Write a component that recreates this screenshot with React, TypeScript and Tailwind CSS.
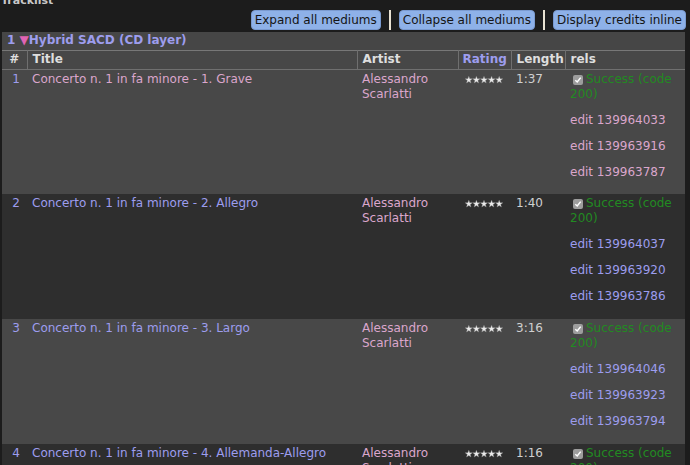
import React from 'react';

interface Track {
  no: number;
  title: string;
  artist: string;
  length: string;
  edits: string[];
  titleVisited?: boolean;
  editsVisited?: boolean;
}

const tracks: Track[] = [
  {
    no: 1,
    title: 'Concerto n. 1 in fa minore - 1. Grave',
    artist: 'Alessandro Scarlatti',
    length: '1:37',
    edits: ['139964033', '139963916', '139963787'],
    titleVisited: true,
    editsVisited: true,
  },
  {
    no: 2,
    title: 'Concerto n. 1 in fa minore - 2. Allegro',
    artist: 'Alessandro Scarlatti',
    length: '1:40',
    edits: ['139964037', '139963920', '139963786'],
  },
  {
    no: 3,
    title: 'Concerto n. 1 in fa minore - 3. Largo',
    artist: 'Alessandro Scarlatti',
    length: '3:16',
    edits: ['139964046', '139963923', '139963794'],
  },
  {
    no: 4,
    title: 'Concerto n. 1 in fa minore - 4. Allemanda-Allegro',
    artist: 'Alessandro Scarlatti',
    length: '1:16',
    edits: ['139964050', '139963927', '139963798'],
  },
];

const STAR = '5,0 6.25,3.3 9.76,3.45 6.95,5.6 7.94,9.05 5,7.1 2.06,9.05 3.05,5.6 0.24,3.45 3.75,3.3';

function Stars() {
  return (
    <svg width="38" height="8" viewBox="0 0 50 10" className="block">
      {[0, 10, 20, 30, 40].map(x => (
        <polygon key={x} points={STAR} transform={`translate(${x} 0)`} fill="#ececec" stroke="#8a8a8a" strokeWidth="0.5" />
      ))}
    </svg>
  );
}

function Check() {
  return (
    <span className="inline-flex items-center justify-center w-[10px] h-[10px] ml-[3px] mr-[3px] rounded-[2px] bg-[#9d9d9d] align-[-1px]">
      <svg width="8" height="8" viewBox="0 0 8 8">
        <path d="M1.3 4.2 L3.2 6 L6.7 1.6" fill="none" stroke="#fff" strokeWidth="1.5" />
      </svg>
    </span>
  );
}

const visited = 'text-[#dba6cc]';
const link = 'text-[#9d9dee]';

export default function App() {
  return (
    <div className="min-h-screen bg-[#1c1c1c] text-[12px] leading-[15px] text-[#d4d4d4]" style={{ fontFamily: '"DejaVu Sans", Verdana, sans-serif' }}>
      <div className="h-[6px] overflow-hidden flex items-end px-[1px]">
        <h2 className="text-[11px] leading-[11px] font-bold text-[#c8c8c8]">Tracklist</h2>
      </div>

      <div className="flex justify-end items-center pr-[4px] mt-[4px] h-[20px]">
        <button className="h-[20px] px-[3px] rounded-[4px] bg-[#8eb1e8] border border-[#7a9ad0] text-[#151515] leading-[18px]">Expand all mediums</button>
        <span className="w-[2px] h-[20px] bg-[#e9e2d2] mx-[8px]" />
        <button className="h-[20px] px-[3px] rounded-[4px] bg-[#8eb1e8] border border-[#7a9ad0] text-[#151515] leading-[18px]">Collapse all mediums</button>
        <span className="w-[2px] h-[20px] bg-[#e9e2d2] mx-[8px]" />
        <button className="h-[20px] px-[3px] rounded-[4px] bg-[#8eb1e8] border border-[#7a9ad0] text-[#151515] leading-[18px]">Display credits inline</button>
      </div>

      <table className="ml-[2px] mt-[2px] w-[683px] table-fixed border-collapse">
        <colgroup>
          <col className="w-[25px]" />
          <col className="w-[330px]" />
          <col className="w-[101px]" />
          <col className="w-[53px]" />
          <col className="w-[54px]" />
          <col className="w-[120px]" />
        </colgroup>
        <thead>
          <tr className="h-[18px] bg-[#464646] border-b border-[#777]">
            <th colSpan={6} className="text-left font-bold text-[#9d9dee] pl-[5px]">
              1 <span className="text-[#e064b4] text-[12px]">▼</span>Hybrid SACD (CD layer)
            </th>
          </tr>
          <tr className="h-[19px] bg-[#474747] border-b border-[#6f6f6f] font-bold text-[#dedede]">
            <th className="text-center">#</th>
            <th className="text-left pl-[5px] border-l border-[#6f6f6f]">Title</th>
            <th className="text-left pl-[5px] border-l border-[#6f6f6f]">Artist</th>
            <th className="text-left pl-[4px] border-l border-[#6f6f6f] text-[#9d9dee]">Rating</th>
            <th className="text-left pl-[5px] border-l border-[#6f6f6f]">Length</th>
            <th className="text-left pl-[5px] border-l border-[#6f6f6f]">rels</th>
          </tr>
        </thead>
        <tbody>
          {tracks.map(t => (
            <tr key={t.no} className={`h-[125px] align-top ${t.no % 2 === 1 ? 'bg-[#484848]' : 'bg-[#2e2e2e]'}`}>
              <td className={`text-right pr-[7px] pt-[2px] ${link}`}>{t.no}</td>
              <td className={`pl-[5px] pt-[2px] ${t.titleVisited ? visited : link}`}>{t.title}</td>
              <td className={`pl-[5px] pt-[2px] ${visited}`}>{t.artist}</td>
              <td className="pl-[7px] pt-[6px]"><Stars /></td>
              <td className="pl-[5px] pt-[2px] text-[#d0d0d0]">{t.length}</td>
              <td className="pl-[5px] pr-[4px] pt-[2px]">
                <div className="text-[#228a22]">
                  <Check />Success (code 200)
                </div>
                {t.edits.map(e => (
                  <div key={e} className={`mt-[11px] ${t.editsVisited ? visited : link}`}>edit {e}</div>
                ))}
              </td>
            </tr>
          ))}
        </tbody>
      </table>
    </div>
  );
}
